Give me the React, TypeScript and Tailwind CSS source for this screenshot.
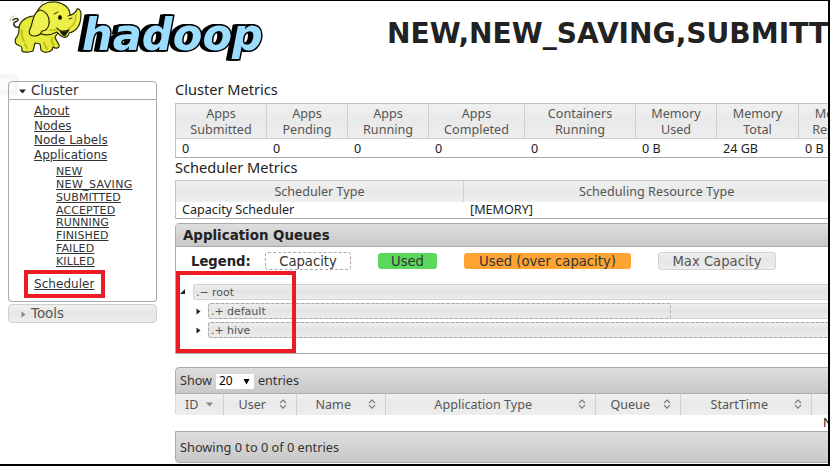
import type { ReactNode } from "react";

const verdana = "font-['DejaVu_Sans',Verdana,sans-serif]";

const metricHeads = [
  ["Apps", "Submitted"],
  ["Apps", "Pending"],
  ["Apps", "Running"],
  ["Apps", "Completed"],
  ["Containers", "Running"],
  ["Memory", "Used"],
  ["Memory", "Total"],
  ["Memory", "Reserved"],
];
const metricValues = ["0", "0", "0", "0", "0", "0 B", "24 GB", "0 B"];
const states = ["NEW", "NEW_SAVING", "SUBMITTED", "ACCEPTED", "RUNNING", "FINISHED", "FAILED", "KILLED"];

function Elephant() {
  return (
    <g stroke="#2a2b05" strokeWidth="1.2" strokeLinejoin="round" strokeLinecap="round">
      <path d="M19 27c-4 1-6-2-5-4s4-1 4-3-3-2-5 0" fill="none" strokeWidth="1.5" />
      <path d="M10 21l1-3M12 17l2-1M41 3l3-2M43 6l2-2" fill="none" stroke="#999" strokeWidth=".8" />
      <path
        d="M33 16C25 17 19 22 19 29C19 33 18 36 16 38C14 41 15 45 20 46C22 46 22 49 22 51C24 53 31 52 33 51L35 43L40 44L41 50C44 54 50 52 52 50L53 47C56 49 60 48 59 45C58 42 56 41 55 37L60 30L50 14Z"
        fill="#e6ea3a"
      />
      <path d="M22 30c-1 5 0 8 2 11M25 44l2 4M44 43l3 6M52 38c-1 3 0 5 2 7" fill="none" stroke="#bcc01c" strokeWidth="2" />
      <path
        d="M37 12C40 5 47 1 56 2C64 3 70 8 70 15C72 15 76 13 77 9C79 8 81 11 81 14C81 23 78 31 69 33C69 36 66 38 63 37C60 36 59 34 57 32C51 35 45 36 39 33Z"
        fill="#eef04a"
      />
      <path d="M76 15c0 6-2 11-8 14M50 30c3 1 5 0 7-1" fill="none" stroke="#c6ca22" strokeWidth="2" />
      <path d="M40 10C46 11 50 17 49 24C48 29 46 31 42 31C41 34 38 36 34 36C30 36 28 33 30 29C33 24 32 13 40 10Z" fill="#eef150" />
      <path d="M60 31c2 1 6 1 9-1l-4 6c-2 0-4-2-5-5z" fill="#171800" strokeWidth=".8" />
      <path d="M57 28c2 3 6 4 12 2" fill="none" />
      <ellipse cx="60" cy="17.500" rx="1.700" ry="2.200" fill="#111" strokeWidth=".5" />
      <path d="M54 14l4-2M68 16l3-1M69 19l3-1" fill="none" strokeWidth="1" />
    </g>
  );
}

function Logo() {
  return (
    <svg width="270" height="64" viewBox="0 1 270 64" className="shrink-0">
      <text
        x="82"
        y="49.500"
        textLength="181"
        lengthAdjust="spacingAndGlyphs"
        fontFamily="DejaVu Sans"
        fontWeight="700"
        fontStyle="italic"
        fontSize="44.5"
        fill="#9bdcff"
        stroke="#000"
        strokeWidth="3"
        paintOrder="stroke"
        className="[filter:drop-shadow(-2px_0_0_#000)_drop-shadow(-2px_0_0_#000)]"
      >
        hadoop
      </text>
      <Elephant />
    </svg>
  );
}

function SortIcon() {
  return (
    <svg width="8" height="10" viewBox="0 0 8 10" fill="none" stroke="#777" strokeWidth="1.1" className="relative -top-px">
      <path d="M1 4L4 1 7 4M1 6.200L4 9.200 7 6.200" />
    </svg>
  );
}

function Triangle({ dir, color = "#222" }: { dir: "down" | "right" | "corner" | "select"; color?: string }) {
  const d = { down: "M0 1.5h7L3.5 5.5z", right: "M1.5 0.5l4 3L1.5 6.500z", corner: "M6 0v5H1z", select: "M.5 1h6L3.5 6.500z" }[dir];
  return (
    <svg width="7" height="7" viewBox="0 0 7 7" className="shrink-0">
      <path d={d} fill={color} />
    </svg>
  );
}

function Head({ children, className = "" }: { children?: ReactNode; className?: string }) {
  return (
    <div className={`border-r border-[#d0d0d0] bg-linear-to-b from-[#f0f0f0] via-[#e9e9e9] to-[#eeeeee] text-[#555] ${className}`}>
      {children}
    </div>
  );
}

function Sidebar() {
  return (
    <nav className={`ml-2 mt-4 w-[149px] shrink-0 text-[#333] ${verdana}`}>
      <div className="flex h-[19px] items-center rounded-t-[4px] border border-[#aaa] pl-[10px] pt-[2px] text-[13.4px] text-[#333]">
        <Triangle dir="down" />
        <span className="ml-[5px]">Cluster</span>
      </div>
      <div className="h-[202px] rounded-b-[4px] border border-t-0 border-[#aaa] pl-[25px] pt-[4px]">
        <ul className="text-[12px] leading-[14.5px] underline">
          <li>About</li>
          <li>Nodes</li>
          <li>Node Labels</li>
          <li>Applications</li>
        </ul>
        <ul className="ml-[22px] mt-[4px] text-[11px] leading-[12.85px] underline">
          {states.map((s) => (
            <li key={s} className={s === "NEW_SAVING" ? "tracking-[0.35px]" : "tracking-[0.1px]"}>{s}</li>
          ))}
        </ul>
        <div className="-ml-[10px] mt-px flex h-[28px] w-[81px] items-center border-4 border-[#ed1c24] pl-[6px] text-[12px] tracking-[0.05px] underline">
          Scheduler
        </div>
      </div>
      <div className="mt-[2px] flex h-[19px] items-center rounded-[4px] border border-[#d0d0d0] bg-linear-to-b from-[#f0f0f0] via-[#e6e6e6] to-[#ededed] pl-[11px] pt-[2px] text-[13.4px] text-[#555]">
        <Triangle dir="right" color="#888" />
        <span className="ml-[4px]">Tools</span>
      </div>
    </nav>
  );
}

function Queue({ name, sign, dashed = "border border-transparent" }: { name: string; sign: string; dashed?: string }) {
  return (
    <div className="h-[16px] grow rounded-l-[3px] border border-r-0 border-[#d3d3d3] bg-linear-to-b from-[#ededed] via-[#e4e4e4] to-[#ececec] text-[11px] text-[#555]">
      <div className={`-m-px flex h-[16px] items-center rounded-[3px] pl-[2px] leading-none ${dashed}`}>
        <span className="w-[16px] whitespace-nowrap">.{sign}</span>
        {name}
      </div>
    </div>
  );
}

function Queues() {
  return (
    <section className={`mt-[4px] h-[131px] w-[900px] rounded-t-[4px] border border-[#aaa] ${verdana}`}>
      <h3 className="flex h-[23px] items-center rounded-t-[3px] border-b border-[#aaa] bg-linear-to-b from-[#dedede] to-[#c8c8c8] pl-[7px] pt-[2px] text-[13.4px] font-bold text-[#222]">
        Application Queues
      </h3>
      <div className="mt-[5px] flex h-[18px] items-center pl-[15px] text-[13.2px] leading-none text-[#333]">
        <b className="w-[74px] pt-px text-[#222]">Legend:</b>
        <span className="flex h-[18px] w-[86px] items-center justify-center rounded-[3px] border border-dashed border-[#aaa] pt-px">Capacity</span>
        <span className="ml-[27px] flex h-[16px] w-[59px] items-center justify-center rounded-[3px] bg-[#5bd75b] pt-px">Used</span>
        <span className="ml-[27px] flex h-[16px] w-[167px] items-center justify-center rounded-[3px] bg-[#ffa333] pt-px">Used (over capacity)</span>
        <span className="ml-[27px] flex h-[18px] w-[118px] items-center justify-center rounded-[3px] border border-[#d3d3d3] bg-linear-to-b from-[#eee] via-[#e6e6e6] to-[#eee] pt-px text-[#555]">Max Capacity</span>
      </div>
      <div className="mt-[14px] space-y-[3px]">
        <div className="flex items-center pl-[3px]">
          <Triangle dir="corner" />
          <span className="w-[7px]" />
          <Queue name="root" sign="−" />
        </div>
        <div className="flex items-center pl-[19px]">
          <Triangle dir="right" />
          <span className="w-[6px]" />
          <Queue name="default" sign="+" dashed="w-[463px] border border-dashed border-[#aaa]" />
        </div>
        <div className="flex items-center pl-[19px]">
          <Triangle dir="right" />
          <span className="w-[6px]" />
          <Queue name="hive" sign="+" dashed="border border-dashed border-[#aaa]" />
        </div>
      </div>
    </section>
  );
}

function AppsTable() {
  const cols = [
    { name: "User", pad: "pr-[9px]", gap: "gap-[13px]" },
    { name: "Name", pad: "pr-[9px]", gap: "gap-[17px]" },
    { name: "Application Type", pad: "pr-[9px]", gap: "gap-[46px]" },
    { name: "Queue", pad: "pr-[9px]", gap: "gap-[13px]" },
    { name: "StartTime", pad: "pr-[9px]", gap: "gap-[26px]" },
  ];
  return (
    <section className="mt-[13px] w-[900px]">
      <div className="flex h-[27px] items-center rounded-t-[4px] border border-[#aaa] bg-linear-to-b from-[#dedede] to-[#c8c8c8] pl-[4px] pt-px text-[#333]">
        Show
        <span className="mx-[4px] flex h-[15px] w-[38px] items-center justify-between bg-white pl-[3px] pr-[4px] text-[12px] leading-none text-black">
          20 <Triangle dir="select" color="#000" />
        </span>
        entries
      </div>
      <div className="grid h-[20px] grid-cols-[48px_73px_89px_210px_85px_131px_264px] border-b border-l border-[#d8d8d8]">
        <Head className="flex items-center pl-[9px] pt-[2px]">
          ID
          <span className="relative -top-px ml-[8px]"><Triangle dir="down" color="#888" /></span>
        </Head>
        {cols.map((c) => (
          <Head key={c.name} className={`flex items-center justify-end pt-[2px] ${c.pad} ${c.gap}`}>
            {c.name}
            <SortIcon />
          </Head>
        ))}
        <Head />
      </div>
      <div className="flex h-[17px] items-center pl-[648px] pt-[2px] text-[#222]">No data available in table</div>
      <div className="flex h-[32px] items-center rounded-b-[4px] border border-[#aaa] bg-linear-to-b from-[#dedede] to-[#c8c8c8] pl-[4px] pt-px text-[12.75px] text-[#333]">
        Showing 0 to 0 of 0 entries
      </div>
    </section>
  );
}

export default function App() {
  return (
    <div className="h-[467px] w-[834px] overflow-hidden bg-white font-['Noto_Sans',sans-serif] text-[12.6px]">
      <div className="relative h-[466px] w-[830px] overflow-hidden border-b-2 border-r-2 border-t border-black">
        <div className="absolute left-0 top-[73px] h-[21px] w-[18px] rounded-r-[3px] bg-[#f5f5f5]">
          <div className="mt-[5px] h-[11px] w-[15px] bg-[#fbfbfb]" />
        </div>
        <header className="flex h-[64px] whitespace-nowrap">
          <Logo />
          <h1 className={`ml-[117px] mt-[15px] text-[28.1px] font-bold leading-[35px] text-[#222] ${verdana}`}>
            NEW,NEW_SAVING,SUBMITTED
          </h1>
        </header>
        <div className="relative flex">
          <Sidebar />
          <main className="ml-[18px] mt-[14px] w-[653px] shrink-0 overflow-hidden whitespace-nowrap">
            <h2 className="h-[24px] text-[14.6px] leading-[20px] text-[#222]">Cluster Metrics</h2>
            <div className="w-[706px] border border-[#c4c4c4] border-b-[#aaa]">
              <div className="grid h-[34px] grid-cols-[91px_81px_81px_96px_111px_81px_82px_82px]">
                {metricHeads.map(([a, b], i) => (
                  <Head key={i} className="pt-[2px] text-center leading-[16px]">
                    <div>{a}</div>
                    <div>{b}</div>
                  </Head>
                ))}
              </div>
              <div className="grid h-[19px] grid-cols-[91px_81px_81px_96px_111px_81px_82px_82px] items-center border-t border-[#ccc] pt-[2px] leading-none text-[#222]">
                {metricValues.map((v, i) => (
                  <span key={i} className="pl-[6px]">{v}</span>
                ))}
              </div>
            </div>
            <h2 className="h-[22px] text-[14.6px] leading-[18px] text-[#222]">Scheduler Metrics</h2>
            <div className="w-[900px] border border-[#c4c4c4] border-b-[#aaa]">
              <div className="grid h-[18px] grid-cols-[288px_612px] leading-[21px]">
                <Head className="text-center">Scheduler Type</Head>
                <Head className="pl-[115px] tracking-[0.04px]">Scheduling Resource Type</Head>
              </div>
              <div className="grid h-[19px] grid-cols-[288px_612px] items-center border-t border-[#ccc] pt-[2px] leading-none text-[#222]">
                <span className="pl-[6px]">Capacity Scheduler</span>
                <span className="pl-[6px]">[MEMORY]</span>
              </div>
            </div>
            <Queues />
            <AppsTable />
          </main>
          <div className="absolute left-[176px] top-[206px] h-[82px] w-[120px] border-4 border-[#ed1c24]" />
        </div>
      </div>
    </div>
  );
}
